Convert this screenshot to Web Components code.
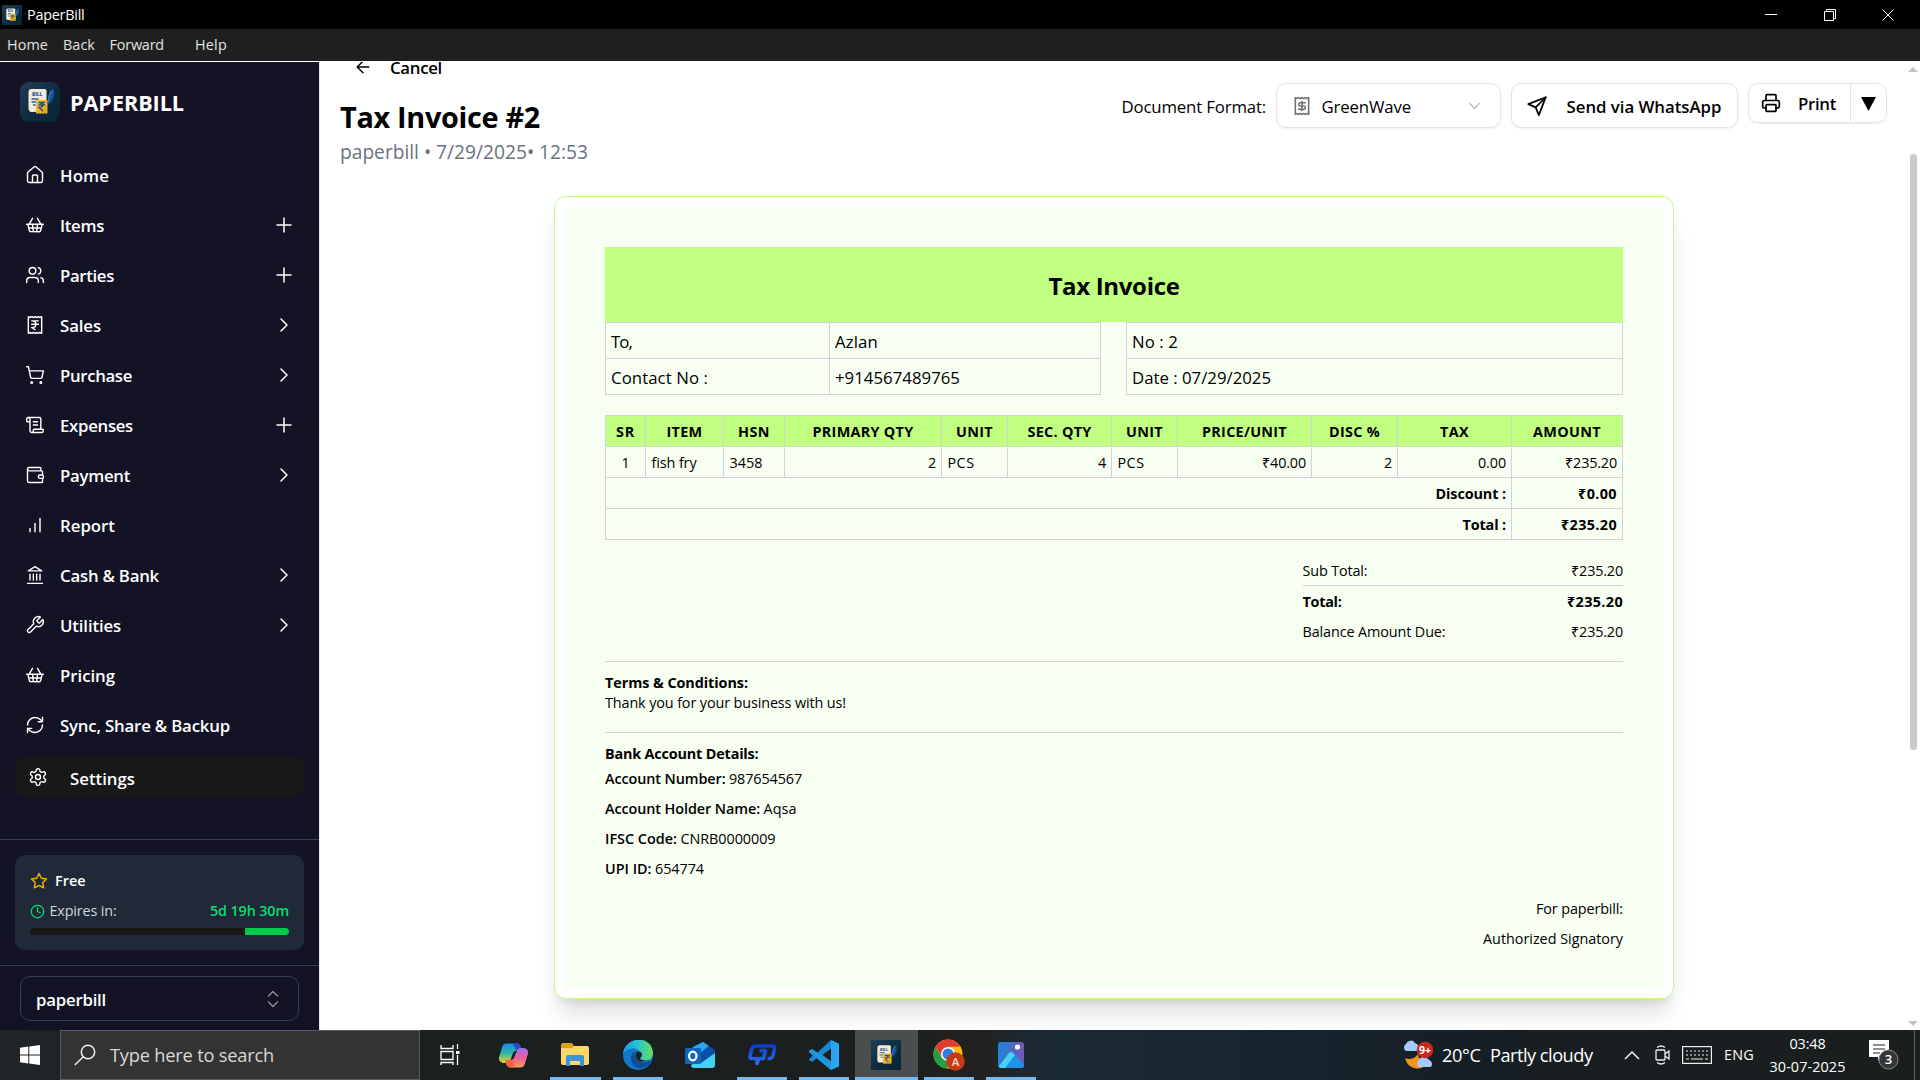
<!DOCTYPE html>
<html lang="en">
<head>
<meta charset="utf-8">
<title>PaperBill</title>
<style>
html,body{margin:0;padding:0}
body{width:1920px;height:1080px;overflow:hidden;background:#fff;font-family:"Open Sans","Noto Sans",sans-serif;color:#000}
</style>
</head>
<body>
<app-window></app-window>
<script>
const texts = [];

/* Single-line label; "w" is the advance width the label occupies, "s" its nominal size. */
class UiText extends HTMLElement {
  connectedCallback() {
    if (this.shadowRoot) return;
    const nominal = parseFloat(this.getAttribute('s') || '15');
    const size = nominal * 0.96;
    const weight = this.getAttribute('b') || '400';
    const colour = this.getAttribute('c') || 'inherit';
    const drop = this.hasAttribute('drop') ? 'padding-top:2px;' : '';
    this.attachShadow({mode:'open'}).innerHTML =
      `<style>:host{display:inline-block;flex:none;white-space:pre;line-height:20px;${drop}font-size:${size}px;font-weight:${weight};color:${colour}}span{display:inline-block}</style><span><slot></slot></span>`;
    texts.push(this);
    this.fit();
  }
  fit() {
    const w = parseFloat(this.getAttribute('w'));
    if (!w) return;
    const span = this.shadowRoot.querySelector('span');
    span.style.letterSpacing = '0px';
    span.style.width = 'auto';
    const natural = span.getBoundingClientRect().width;
    const n = this.textContent.length;
    if (natural) { span.style.letterSpacing = ((w - natural) / n) + 'px'; span.style.width = w + 'px'; }
  }
}
customElements.define('ui-text', UiText);

const ICONS = {
  home:'<path d="M15 21v-8a1 1 0 0 0-1-1h-4a1 1 0 0 0-1 1v8"/><path d="M3 10a2 2 0 0 1 .709-1.528l7-5.999a2 2 0 0 1 2.582 0l7 5.999A2 2 0 0 1 21 10v9a2 2 0 0 1-2 2H5a2 2 0 0 1-2-2z"/>',
  basket:'<path d="m15 11-1 9M19 11l-4-7M2 11h20M3.5 11l1.6 7.4a2 2 0 0 0 2 1.6h9.8a2 2 0 0 0 2-1.6l1.7-7.4M4.5 15.5h15M5 11l4-7M9 11l1 9"/>',
  users:'<path d="M16 21v-2a4 4 0 0 0-4-4H6a4 4 0 0 0-4 4v2"/><circle cx="9" cy="7" r="4"/><path d="M22 21v-2a4 4 0 0 0-3-3.87M16 3.13a4 4 0 0 1 0 7.75"/>',
  rupee:'<path d="M4 2v20l2-1 2 1 2-1 2 1 2-1 2 1 2-1 2 1V2l-2 1-2-1-2 1-2-1-2 1-2-1-2 1Z"/><path d="M8 7h8M12 17.5 8 15h1a4 4 0 0 0 0-8M8 11h8"/>',
  dollar:'<path d="M4 2v20l2-1 2 1 2-1 2 1 2-1 2 1 2-1 2 1V2l-2 1-2-1-2 1-2-1-2 1-2-1-2 1Z"/><path d="M16 8h-6a2 2 0 1 0 0 4h4a2 2 0 1 1 0 4H8M12 17.5v-11"/>',
  cart:'<circle cx="8" cy="21" r="1"/><circle cx="19" cy="21" r="1"/><path d="M2.05 2.05h2l2.66 12.42a2 2 0 0 0 2 1.58h9.78a2 2 0 0 0 1.95-1.57l1.65-7.43H5.12"/>',
  scroll:'<path d="M15 12h-5M15 8h-5M19 17V5a2 2 0 0 0-2-2H4"/><path d="M8 21h12a2 2 0 0 0 2-2v-1a1 1 0 0 0-1-1H11a1 1 0 0 0-1 1v1a2 2 0 1 1-4 0V5a2 2 0 1 0-4 0v2a1 1 0 0 0 1 1h3"/>',
  wallet:'<path d="M19 7V4a1 1 0 0 0-1-1H5a2 2 0 0 0 0 4h15a1 1 0 0 1 1 1v4h-3a2 2 0 0 0 0 4h3a1 1 0 0 0 1-1v-2a1 1 0 0 0-1-1"/><path d="M3 5v14a2 2 0 0 0 2 2h15a1 1 0 0 0 1-1v-4"/>',
  bars:'<path d="M12 20V10M18 20V4M6 20v-4"/>',
  bank:'<path d="M3 22h18M6 18v-7M10 18v-7M14 18v-7M18 18v-7M12 2l8 5H4z"/>',
  wrench:'<path d="M14.7 6.3a1 1 0 0 0 0 1.4l1.6 1.6a1 1 0 0 0 1.4 0l3.77-3.77a6 6 0 0 1-7.94 7.94l-6.91 6.91a2.12 2.12 0 0 1-3-3l6.91-6.91a6 6 0 0 1 7.94-7.94l-3.76 3.76z"/>',
  sync:'<path d="M3 12a9 9 0 0 1 9-9 9.75 9.75 0 0 1 6.74 2.74L21 8M21 3v5h-5M21 12a9 9 0 0 1-9 9 9.75 9.75 0 0 1-6.74-2.74L3 16M8 16H3v5"/>',
  gear:'<path d="M12.22 2h-.44a2 2 0 0 0-2 2v.18a2 2 0 0 1-1 1.73l-.43.25a2 2 0 0 1-2 0l-.15-.08a2 2 0 0 0-2.73.73l-.22.38a2 2 0 0 0 .73 2.73l.15.1a2 2 0 0 1 1 1.72v.51a2 2 0 0 1-1 1.74l-.15.09a2 2 0 0 0-.73 2.73l.22.38a2 2 0 0 0 2.73.73l.15-.08a2 2 0 0 1 2 0l.43.25a2 2 0 0 1 1 1.73V20a2 2 0 0 0 2 2h.44a2 2 0 0 0 2-2v-.18a2 2 0 0 1 1-1.73l.43-.25a2 2 0 0 1 2 0l.15.08a2 2 0 0 0 2.73-.73l.22-.39a2 2 0 0 0-.73-2.73l-.15-.08a2 2 0 0 1-1-1.74v-.5a2 2 0 0 1 1-1.74l.15-.09a2 2 0 0 0 .73-2.73l-.22-.38a2 2 0 0 0-2.73-.73l-.15.08a2 2 0 0 1-2 0l-.43-.25a2 2 0 0 1-1-1.73V4a2 2 0 0 0-2-2z"/><circle cx="12" cy="12" r="3"/>',
  plus:'<path d="M5 12h14M12 5v14"/>',
  right:'<path d="m9 18 6-6-6-6"/>',
  down:'<path d="m5 9 7 7 7-7"/>',
  updown:'<path d="m6.5 15.5 5.5 5.5 5.5-5.5M6.5 8.5 12 3l5.5 5.5"/>',
  star:'<path d="m12 2 3.09 6.26L22 9.27l-5 4.87 1.18 6.88L12 17.77l-6.18 3.25L7 14.14 2 9.27l6.91-1.01z"/>',
  clock:'<circle cx="12" cy="12" r="10"/><path d="M12 6v6l4 2"/>',
  back:'<path d="m12 19-7-7 7-7M19 12H5"/>',
  send:'<path d="M21.5 2.5 2.5 10l8 3.5L14 22z"/><path d="M21.5 2.5 10.5 13.5"/>',
  printer:'<path d="M6 18H4a2 2 0 0 1-2-2v-5a2 2 0 0 1 2-2h16a2 2 0 0 1 2 2v5a2 2 0 0 1-2 2h-2M6 9V3a1 1 0 0 1 1-1h10a1 1 0 0 1 1 1v6"/><rect x="6" y="14" width="12" height="8" rx="1"/>'
};
class UiIcon extends HTMLElement {
  connectedCallback() {
    if (this.shadowRoot) return;
    const s = this.getAttribute('size') || 20, sw = this.getAttribute('sw') || 1.7;
    this.attachShadow({mode:'open'}).innerHTML =
      `<style>:host{display:block;flex:none;width:${s}px;height:${s}px}svg{display:block;width:100%;height:100%}</style>
       <svg viewBox="0 0 24 24" fill="none" stroke="currentColor" stroke-width="${sw}" stroke-linecap="round" stroke-linejoin="round">${ICONS[this.getAttribute('name')]}</svg>`;
  }
}
customElements.define('ui-icon', UiIcon);

class AppLogo extends HTMLElement {
  connectedCallback() {
    const s = this.getAttribute('size'), r = this.getAttribute('r') || 0;
    this.attachShadow({mode:'open'}).innerHTML =
      `<style>:host{display:block;flex:none;width:${s}px;height:${s}px}svg{display:block}</style>
      <svg width="${s}" height="${s}" viewBox="0 0 40 40">
        <defs><linearGradient id="g" x1="0" y1="0" x2="1" y2="1"><stop offset="0" stop-color="#1f3d54"/><stop offset=".6" stop-color="#0d2b3f"/><stop offset="1" stop-color="#062433"/></linearGradient>
        <linearGradient id="y" x1="0" y1="0" x2="1" y2="1"><stop offset="0" stop-color="#f6be36"/><stop offset="1" stop-color="#e9a21c"/></linearGradient></defs>
        <rect width="40" height="40" rx="${r}" fill="url(#g)"/>
        <path d="M8.500 10a3 3 0 0 1 3-3h13a2 2 0 0 1 2 2V29.500l-14 .5a3.500 3.500 0 0 1-4-3.500z" fill="#f6ead6"/>
        <text x="12" y="14.300" font-family="Open Sans" font-weight="800" font-size="5" fill="#2a5ea6" textLength="10.500">BILL</text>
        <path d="M11.500 17h7M11.500 20h4.500M13 23h2.500" stroke="#2a5ea6" stroke-width="1.300"/>
        <path d="M33.500 6.500c1.500 4 .5 10.500-3.500 14.500l-2 1 0-4c0-5 2-9.500 5.500-11.500z" fill="#1c4f9c"/><path d="M32 8.500c-2.500 3-3.200 7-3.500 11" stroke="#4b86d6" fill="none"/>
        <path d="M16 18h11.500v13l-1.500 1-1.500-1-1.400 1-1.400-1-1.400 1-1.400-1-1.400 1-1.500-1z" fill="url(#y)"/>
        <path d="M18.500 20.500h6.500M18.500 23h6.500M19 20.500c5 0 5 4.800 0 4.800l4 4" stroke="#174a86" stroke-width="1.300" fill="none"/>
      </svg>`;
  }
}
customElements.define('app-logo', AppLogo);

class TitleBar extends HTMLElement {
  connectedCallback() {
    this.attachShadow({mode:'open'}).innerHTML = `<style>
      :host{display:block;flex:none;color:#fff}
      .t{height:29px;background:#000;display:flex;align-items:center;padding:0 26px 0 2px;box-sizing:border-box}
      .t ui-text{margin-left:5px}.sp{flex:1}
      svg{display:block;margin-left:46.500px}
      .m{height:32px;background:#1f1f1f;display:flex;align-items:center;padding-left:7px;color:#e2e2e2}
    </style>
    <div class="t"><app-logo size="20"></app-logo><ui-text s="15" w="57.500">PaperBill</ui-text><div class="sp"></div>
      <svg width="12" height="12"><path d="M0 5.500h12" stroke="#fff"/></svg>
      <svg width="12" height="12" fill="none" stroke="#fff"><path d="M.5 2.500h9v9h-9zM2.500 2.500v-2h9v9h-2"/></svg>
      <svg width="12" height="12" stroke="#fff"><path d="M.5.500l11 11M11.500.500l-11 11"/></svg></div>
    <div class="m"><ui-text s="15" w="41" style="margin-right:15px">Home</ui-text><ui-text s="15" w="32" style="margin-right:14.500px">Back</ui-text><ui-text s="15" w="54.500" style="margin-right:31px">Forward</ui-text><ui-text s="15" w="32">Help</ui-text></div>`;
  }
}
customElements.define('title-bar', TitleBar);

class NavItem extends HTMLElement {
  connectedCallback() {
    const end = this.getAttribute('end'), act = this.hasAttribute('active');
    this.attachShadow({mode:'open'}).innerHTML = `<style>
      :host{display:flex;flex:none;align-items:center;height:${act?40:50}px;color:#fff;${act?'margin:7px 15px 0;padding-left:13px;background:#181818;border-radius:10px':'padding:0 23px 0 25px'}}
      ui-text{margin-left:${act?22:15}px;${act?'margin-top:2px':''}}.sp{flex:1}
    </style><ui-icon name="${this.getAttribute('icon')}" size="20"></ui-icon><ui-text drop s="17.500" b="600" w="${this.getAttribute('w')}">${this.textContent.replace('&','&amp;')}</ui-text><div class="sp"></div>${end?`<ui-icon name="${end}" size="24" sw="1.500"></ui-icon>`:''}`;
  }
}
customElements.define('nav-item', NavItem);

class SideBar extends HTMLElement {
  connectedCallback() {
    this.attachShadow({mode:'open'}).innerHTML = `<style>
      :host{display:flex;flex-direction:column;flex:none;width:319px;margin-top:1px;border-right:1px solid #e5e7eb;background:#131325;color:#fff;overflow:hidden}
      .brand{display:flex;align-items:center;gap:10px;height:40px;padding:20px 20px 28px}
      .sp{flex:1}
      .plan{border-top:1px solid #36404f;padding:15px;height:95px}
      .card{background:#1f2937;border-radius:10px;height:95px;padding:16px 15px 0;box-sizing:border-box}
      .row{display:flex;align-items:center;height:20px}
      .bar{height:7px;border-radius:4px;background:#181818;overflow:hidden;margin-top:7px;display:flex;justify-content:flex-end}
      .bar i{width:44px;background:#00c950}
      .org{border-top:1px solid #36404f;padding:10px 20px 9px}
      .sel{height:45px;border:1px solid #36404f;border-radius:10px;box-sizing:border-box;display:flex;align-items:center;padding:0 15px}
    </style>
    <div class="brand"><app-logo size="40" r="9"></app-logo><ui-text drop s="22.500" b="700" w="114">PAPERBILL</ui-text></div>
    <nav-item icon="home" w="49">Home</nav-item>
    <nav-item icon="basket" w="44" end="plus">Items</nav-item>
    <nav-item icon="users" w="54" end="plus">Parties</nav-item>
    <nav-item icon="rupee" w="41" end="right">Sales</nav-item>
    <nav-item icon="cart" w="72" end="right">Purchase</nav-item>
    <nav-item icon="scroll" w="73" end="plus">Expenses</nav-item>
    <nav-item icon="wallet" w="70" end="right">Payment</nav-item>
    <nav-item icon="bars" w="55">Report</nav-item>
    <nav-item icon="bank" w="99" end="right">Cash &amp; Bank</nav-item>
    <nav-item icon="wrench" w="61" end="right">Utilities</nav-item>
    <nav-item icon="basket" w="55">Pricing</nav-item>
    <nav-item icon="sync" w="170">Sync, Share &amp; Backup</nav-item>
    <nav-item icon="gear" w="65" active>Settings</nav-item>
    <div class="sp"></div>
    <div class="plan"><div class="card">
      <div class="row"><ui-icon name="star" size="18" sw="1.900" style="color:#f0b100"></ui-icon><ui-text s="15" b="600" w="30.500" style="margin-left:7px">Free</ui-text></div>
      <div class="row" style="margin-top:10px"><ui-icon name="clock" size="15" sw="2" style="color:#05df72"></ui-icon><ui-text s="15" c="#d1d5dc" w="67" style="margin-left:4.500px">Expires in:</ui-text><div class="sp"></div><ui-text s="15" b="600" c="#05df72" w="79">5d 19h 30m</ui-text></div>
      <div class="bar"><i></i></div>
    </div></div>
    <div class="org"><div class="sel"><ui-text drop s="17.500" b="600" w="70">paperbill</ui-text><div class="sp"></div><ui-icon name="updown" size="20" sw="1.500" style="color:#9a9aa2"></ui-icon></div></div>`;
  }
}
customElements.define('side-bar', SideBar);

class InvoiceCard extends HTMLElement {
  connectedCallback() {
    const H = [['SR',19],['ITEM',36],['HSN',32],['PRIMARY QTY',101],['UNIT',37],['SEC. QTY',64],['UNIT',37],['PRICE/UNIT',85],['DISC %',51],['TAX',29],['AMOUNT',68]];
    const R = [['1',8,'c'],['fish fry',45,'l'],['3458',33,'l'],['2',8,'r'],['PCS',27,'l'],['4',8,'r'],['PCS',27,'l'],['₹40.00',44,'r'],['2',8,'r'],['0.00',28,'r'],['₹235.20',52,'r']];
    const T = (t,w,b=400,s=15) => `<ui-text ${s>15?'drop':''} s="${s}" b="${b}" w="${w}">${t}</ui-text>`;
    this.attachShadow({mode:'open'}).innerHTML = `<style>
      :host{display:block;box-sizing:border-box;width:1120px;height:803px;border:1px solid #bfff80;border-radius:12px;padding:10px;background:#fff;box-shadow:0 20px 25px -5px rgba(0,0,0,.12),0 8px 10px -6px rgba(0,0,0,.12)}
      .page{background:#f7fff3;height:781px;box-sizing:border-box;padding:40px}
      .banner{height:75px;background:#c0ff80;display:flex;align-items:center;justify-content:center}
      .info{display:flex;justify-content:space-between;margin-bottom:20px}
      .grid{display:grid;border:solid #cfd3dc;border-width:1px 0 0 1px;box-sizing:border-box}
      .grid>div{border:solid #cfd3dc;border-width:0 1px 1px 0;display:flex;align-items:center;padding:1px 5px 0}
      .items{grid-template-columns:40px 78px 61px 157px 66px 104px 66px 134px 86px 114px 111px;grid-auto-rows:31px}
      .grid.items>.h{background:#c0ff80;justify-content:center;padding:2px 0 0}
      .grid.items>.l{padding-left:5.500px}
      .c{justify-content:center}.grid>.r{justify-content:flex-end}
      .wide{grid-column:span 10}
      .sum{width:320.500px;margin:16px 0 14px auto}
      .sum div{display:flex;justify-content:space-between;align-items:center;height:29px}
      .sum div:first-child{border-bottom:1px solid #cfd3dc}.sum div:nth-child(2){height:31px}.sum div:nth-child(3){height:30px}
      .sec{border-top:1px solid #cfd3dc;padding-top:11px}
      .ln{display:flex;align-items:center;height:20px}.ln.b{height:30px;gap:3.500px}
      .sign{margin-top:10px}.sign div{height:30px;display:flex;align-items:center;justify-content:flex-end}
    </style>
    <div class="page">
      <div class="banner">${T('Tax Invoice',131,700,25)}</div>
      <div class="info">
        <div class="grid" style="grid-template-columns:224px 271px;grid-auto-rows:36px"><div>${T('To,',21,400,17.5)}</div><div>${T('Azlan',43,400,17.5)}</div><div>${T('Contact No :',97,400,17.5)}</div><div>${T('+914567489765',125,400,17.5)}</div></div>
        <div class="grid" style="grid-template-columns:496px;grid-auto-rows:36px"><div>${T('No : 2',46,400,17.5)}</div><div>${T('Date : 07/29/2025',139,400,17.5)}</div></div>
      </div>
      <div class="grid items">
        ${H.map(h=>`<div class="h">${T(h[0],h[1],700)}</div>`).join('')}
        ${R.map(r=>`<div class="${r[2]}">${T(r[0],r[1])}</div>`).join('')}
        <div class="wide r">${T('Discount :',70.5,700)}</div><div class="r">${T('₹0.00',39,700)}</div>
        <div class="wide r">${T('Total :',43.5,700)}</div><div class="r">${T('₹235.20',56,700)}</div>
      </div>
      <div class="sum"><div>${T('Sub Total:',65)}${T('₹235.20',52)}</div><div>${T('Total:',39,700)}${T('₹235.20',56,700)}</div><div>${T('Balance Amount Due:',143)}${T('₹235.20',52)}</div></div>
      <div class="sec"><div class="ln">${T('Terms &amp; Conditions:',143,700)}</div><div class="ln">${T('Thank you for your business with us!',241)}</div></div>
      <div class="sec" style="margin-top:19px"><div class="ln">${T('Bank Account Details:',153.5,700)}</div>
        <div class="ln b">${T('Account Number:',120.5,600)}${T('987654567',73)}</div>
        <div class="ln b">${T('Account Holder Name:',155,600)}${T('Aqsa',33)}</div>
        <div class="ln b">${T('IFSC Code:',72,600)}${T('CNRB0000009',95)}</div>
        <div class="ln b">${T('UPI ID:',46.5,600)}${T('654774',49)}</div></div>
      <div class="sign"><div>${T('For paperbill:',87)}</div><div>${T('Authorized Signatory',140)}</div></div>
    </div>`;
  }
}
customElements.define('invoice-card', InvoiceCard);

class MainPane extends HTMLElement {
  connectedCallback() {
    this.attachShadow({mode:'open'}).innerHTML = `<style>
      :host{display:flex;flex:1;background:#fff}
      .col{flex:1;display:flex;flex-direction:column}
      .head{display:flex;justify-content:space-between;height:135px;padding:0 19px 0 20px;flex:none}
      .cancel{display:flex;align-items:center;height:14px;margin-bottom:21px;padding-left:13px}
      .l{display:flex;align-items:center}
      .tools{display:flex;align-items:flex-start;padding-top:22px}
      .box{box-sizing:border-box;height:45px;border:1px solid #e4e4e7;border-radius:10px;display:flex;align-items:center;box-shadow:0 1px 2px rgba(0,0,0,.07);flex:none}
      .sp{flex:1}
      .arrow{height:13px;overflow:hidden;display:flex;align-items:center}
      invoice-card{margin-left:234px;flex:none}
      .sb{width:14px;flex:none;display:flex;flex-direction:column;align-items:center}
      .sb svg{display:block}.sb i{width:7px;height:596px;border-radius:4px;background:#c9c9c9;margin-top:82px}
    </style>
    <div class="col"><div class="head">
      <div><div class="cancel"><div class="arrow"><ui-icon name="back" size="20" sw="1.700" style="margin-top:-2px"></ui-icon></div><ui-text s="17.500" b="600" w="52" style="margin-left:17px">Cancel</ui-text></div>
        <div class="l" style="height:40px"><ui-text drop s="30" b="700" w="200">Tax Invoice #2</ui-text></div>
        <div class="l" style="height:30px"><ui-text drop s="20" c="#6a7282" w="248">paperbill • 7/29/2025• 12:53</ui-text></div></div>
      <div class="tools"><div class="l" style="height:46px;padding-top:1px;margin-right:10px"><ui-text s="17.500" w="144.500">Document Format:</ui-text></div>
        <div class="box" style="width:225px;padding:0 17px 0 15px;margin-right:10px"><ui-icon name="dollar" size="20" sw="1.900" style="color:#707070"></ui-icon><ui-text drop s="17.500" w="89.500" style="margin-left:9.500px">GreenWave</ui-text><div class="sp"></div><ui-icon name="down" size="17" sw="1.500" style="color:#aaa"></ui-icon></div>
        <div class="box" style="width:227px;padding-left:14px;margin-right:10px"><ui-icon name="send" size="22" sw="1.900"></ui-icon><ui-text drop s="17.500" b="600" w="155" style="margin-left:18.500px">Send via WhatsApp</ui-text></div>
        <div class="box" style="width:139px;height:40px"><div class="l" style="width:101px;height:100%;border-right:1px solid #e4e4e7"><ui-icon name="printer" size="20" sw="2" style="margin:-1px 0 0 12px"></ui-icon><ui-text s="17.500" b="600" w="38" style="margin:2px 0 0 17px">Print</ui-text></div>
          <svg width="15" height="14" style="margin:1px 0 0 10px"><path d="M0 0h15L7.500 14z"/></svg></div>
      </div></div>
      <invoice-card></invoice-card></div>
    <div class="sb"><svg width="10" height="5" style="margin-top:6px"><path d="M5 0l5 5H0z" fill="#c4c4c4"/></svg><i></i><div class="sp"></div><svg width="10" height="5" style="margin-bottom:4px"><path d="M0 0h10L5 5z" fill="#c4c4c4"/></svg></div>`;
  }
}
customElements.define('main-pane', MainPane);

class TaskBar extends HTMLElement {
  connectedCallback() {
    this.attachShadow({mode:'open'}).innerHTML = `<style>
      :host{display:flex;flex:none;height:50px;position:relative;z-index:1;color:#fff;background:linear-gradient(90deg,#1f2428 0,#1b1f20 420px,#1c1f20 900px,#22211f 975px,#1a2a35 1045px,#17242d 1300px,#151f26 1440px,#1a1e20 1600px,#1b1e1f 1920px)}
      .start{width:60px;display:flex;align-items:center;justify-content:center}
      .search{width:360px;box-sizing:border-box;background:#333;border:1px solid #5c5c5c;display:flex;align-items:center;padding-left:13px}
      .app{display:flex;flex-direction:column;align-items:center;justify-content:center;position:relative;width:62.200px;flex:none}
      .app.on::after{content:"";position:absolute;bottom:0;left:6px;right:6px;height:3px;background:#76b9ed}
      .app.act{background:#4b4e4f}.app.act::after{left:0;right:0}
      svg{display:block;flex:none}.sp{flex:1}
      .tray{display:flex;align-items:center}
      .clock{display:flex;flex-direction:column;align-items:center;width:76px}
      .clock ui-text{height:23px;line-height:23px}
    </style>
    <div class="start"><svg width="20" height="20"><path d="M0 2.800 8.300 1.500V9.500H0zM9.300 1.400 20 0v9.500H9.300zM0 10.500h8.300v8L0 17.200zM9.300 10.500H20V20L9.300 18.600z" fill="#fff"/></svg></div>
    <div class="search"><svg width="22" height="22" fill="none" stroke="#eee" stroke-width="1.500"><circle cx="14" cy="8" r="6.700"/><path d="M9.300 12.700.8 21"/></svg><ui-text s="19" w="164" c="#d8d8d8" style="margin-left:14px">Type here to search</ui-text></div>
    <div class="app"><svg width="22" height="22" style="margin-left:-2px" fill="none" stroke="#fff" stroke-width="1.300"><path d="M2 1v3.500h12V1M2 7.500h12v8H2zM2 21v-2.500h12V21M18.500 0v5M18.500 11v10"/><path d="M17 7h3.500v3H17z" fill="#fff" stroke="none"/></svg></div>
    <div class="app"><svg width="29" height="25" viewBox="1 1.500 28 27" preserveAspectRatio="none"><defs><linearGradient id="c1" x1="0" y1="0" x2="0" y2="1"><stop offset="0" stop-color="#1b8ae6"/><stop offset=".5" stop-color="#28b6a8"/><stop offset="1" stop-color="#f2d21f"/></linearGradient><linearGradient id="c2" x1="0" y1="0" x2="0" y2="1"><stop offset="0" stop-color="#a46bf0"/><stop offset=".5" stop-color="#e9609c"/><stop offset="1" stop-color="#fb9a52"/></linearGradient></defs>
      <path d="M8 2h10q3 0 4 4l1 4h-5q-3 0-4 4l-2 6q-1 3-4 3H5q-5-1-4-6l3-11q1-4 4-4z" fill="url(#c1)"/><path d="M14 2h5q2 0 3 4l1 4h-5z" fill="#1c50c4"/><path d="M22 28H12q-3 0-4-4l-1-4h5q3 0 4-4l2-5q1-4 4-4h3q5 1 4 6l-3 11q-1 4-4 4z" fill="url(#c2)"/><path d="M16 28h-4q-3 0-4-4l-1-4h5l2-1z" fill="#f4603c"/></svg></div>
    <div class="app on"><svg width="28" height="24" viewBox="0 0 28 24"><path d="M0 2q0-2 2-2h9l2 3v3H0z" fill="#e2a009"/><path d="M0 5h11l2-2h13q2 0 2 2v15q0 2-2 2H2q-2 0-2-2z" fill="#ffd766"/><path d="M5 23V14q0-2 2-2h14q2 0 2 2v9h-4v-5H9v5z" fill="#3b93dc"/></svg></div>
    <div class="app on"><svg width="30" height="30" viewBox="0 0 30 30"><defs><linearGradient id="e1" x1="0" y1="0" x2="1" y2="0"><stop offset="0" stop-color="#1798e6"/><stop offset=".5" stop-color="#2bc3d2"/><stop offset="1" stop-color="#66e04f"/></linearGradient></defs>
      <circle cx="15" cy="15" r="15" fill="#0f78cc"/><path d="M22 20.500q-4 0-5.500-2 3-2 1-6-3-5-9-4-6 1-8.500 6C1-4 29-6 30 13q0 7.500-8 7.500z" fill="url(#e1)"/><path d="M12 11q-8 7-1 15 7 5 14-1 2-2 3-5-5 3-11 1-6-3-5-10z" fill="#114d92"/><path d="M13.500 12q4-1.500 5.500 2 .5 2.500-2 4.500 1.500 2.500 6 2-5 2-8.500-1-3-3.500-1-7.500z" fill="#1c1f20"/></svg></div>
    <div class="app"><svg width="30" height="30" viewBox="0 0 30 30"><path d="M5 9 18 2l11 8v4L18 22H5z" fill="#1183d8"/><path d="m8 7 10-5 6 4-11 8-5-1z" fill="#2aa6ec"/><path d="M30 13v12q0 3-3 3H9q-3 0-3-3l10-6z" fill="#43d1f5"/><path d="m24 6 6 4v3L16 23l-2-9z" fill="#0a4fa6"/><rect y="8" width="16" height="16" rx="1.500" fill="#0c66c0"/><ellipse cx="7.800" cy="16" rx="3.700" ry="4.400" fill="none" stroke="#fff" stroke-width="2.200"/></svg></div>
    <div class="app on"><svg width="30" height="26" viewBox="0 0 30 26"><defs><linearGradient id="b" x1="0" y1="0" x2="0" y2="1"><stop offset="0" stop-color="#0f3fc8"/><stop offset="1" stop-color="#2a6cf0"/></linearGradient></defs><g fill="none" stroke="url(#b)" stroke-width="3.600" stroke-linejoin="round"><path d="M12.500 8.500H18.500L16.500 16.500H12L10 21.500V16.500H5Q2.500 16.500 3 14L5 6.500Q6 4 8.500 4H25.500Q28 4 27.500 6.500L26 13.500Q25 16.500 22.500 16.500H20.500"/></g></svg></div>
    <div class="app on"><svg width="30" height="30" viewBox="0 0 30 30"><path d="M22 0 8 13 3 9 0 11v1l4 3.500L0 19v1l3 2 5-4 14 12z" fill="#1b87d0"/><path d="M22.200 8.500v13L13.500 15z" fill="#1c1f20"/><path d="M3 9 0 11v1l22 18 .2-8.500z" fill="#2295df"/><path d="M22 0l8 3.500v23L22 30z" fill="#29a5f2"/></svg></div>
    <div class="app on act"><app-logo size="30"></app-logo></div>
    <div class="app on"><svg width="32" height="32" viewBox="0 0 32 32"><circle cx="15" cy="15" r="14.500" fill="#fbc116"/><path d="M2.400 7.800a14.500 14.500 0 0 1 25.100 0H15L9 18z" fill="#e33b2e"/><path d="M2.400 7.800A14.500 14.500 0 0 0 14 29.500L20 19H9z" fill="#24a148"/><circle cx="15" cy="15" r="7" fill="#fff"/><circle cx="15" cy="15" r="5.500" fill="#2a7de1"/><circle cx="22.500" cy="22.500" r="9.300" fill="#c53a12"/><text x="22.500" y="26.600" text-anchor="middle" font-family="Open Sans" font-size="11.500" font-weight="600" fill="#f4d9cf">A</text></svg></div>
    <div class="app on"><svg width="26" height="26" viewBox="0 0 26 26"><defs><linearGradient id="p" x1="0" y1="0" x2="1" y2="0"><stop offset="0" stop-color="#1e83d8"/><stop offset="1" stop-color="#7457b8"/></linearGradient></defs><rect width="26" height="26" rx="3" fill="url(#p)"/><path d="M1 25 11 11q2-2 4 0l11 12q0 3-3 3H3z" fill="#1c94e6"/><path d="M1 24 11 11q2-2 4 0l2 2L7 26H3q-2 0-2-2z" fill="#45d2f4"/><circle cx="19.500" cy="5" r="2.600" fill="#fff"/></svg></div>
    <div class="sp"></div>
    <div class="tray">
      <svg width="32" height="30" viewBox="0 0 32 30"><path d="M3 18q8 3 13-4 1 7 8 10-4 6-12 4Q5 26 3 18z" fill="#f0921e"/><path d="M4 11a4 4 0 0 1 0-7 5 5 0 0 1 9-1q5 2 4 8z" fill="#a9c8fa"/><path d="M17 27a4 4 0 0 1 0-7 5 5 0 0 1 9-1q6 3 3 8z" fill="#a9c8fa"/><circle cx="23" cy="10" r="8.300" fill="#c8281d"/><text x="23" y="14" text-anchor="middle" font-family="Open Sans" font-size="10.500" font-weight="700" fill="#fff">9+</text></svg>
      <ui-text s="19" w="38.500" style="margin-left:8px">20°C</ui-text><ui-text s="19" w="102.500" style="margin-left:9.500px">Partly cloudy</ui-text>
      <svg width="16" height="10" style="margin-left:31px" fill="none" stroke="#eee" stroke-width="1.500"><path d="m1 9 7-7 7 7"/></svg>
      <svg width="16" height="20" style="margin-left:15px" fill="none" stroke="#eee" stroke-width="1.300"><rect x="1" y="5" width="9" height="10" rx="1"/><path d="m10 9 4-3v8l-4-3M2 2.500q4-3 8 0M2 17.500q4 3 8 0"/></svg>
      <svg width="30" height="18" style="margin-left:11px" fill="none" stroke="#eee" stroke-width="1.200"><rect x=".6" y=".6" width="28.800" height="16.800"/><path d="M4 5h22M4 9h22" stroke-dasharray="2 2"/><path d="M4 13h3M9 13h12M23 13h3"/></svg>
      <ui-text s="15" w="30" style="margin:0 15.500px 0 12.500px">ENG</ui-text>
      <div class="clock"><ui-text s="15" w="36">03:48</ui-text><ui-text s="15" w="76">30-07-2025</ui-text></div>
      <svg width="31" height="30" viewBox="0 0 31 30" style="margin:0 14.500px 0 23px"><path d="M0 0h20v17H12l-3 4v-4H0z" fill="#fff"/><path d="M4 5h12M4 9h12M4 13h7" stroke="#222" stroke-width="1.200"/><circle cx="19.500" cy="19.500" r="9.500" fill="#333738" stroke="#888"/><text x="19.500" y="24" text-anchor="middle" font-family="Open Sans" font-size="13" font-weight="600" fill="#fff">3</text></svg>
      <svg width="6" height="50"><path d="M.5 0v50" stroke="#5d6163"/></svg>
    </div>`;
  }
}
customElements.define('task-bar', TaskBar);

class AppWindow extends HTMLElement {
  connectedCallback() {
    this.attachShadow({mode:'open'}).innerHTML = `<style>
      :host{display:flex;flex-direction:column;width:1920px;height:1080px;overflow:hidden;background:#fff}
      .body{flex:1;display:flex;min-height:0}
    </style><title-bar></title-bar><div class="body"><side-bar></side-bar><main-pane></main-pane></div><task-bar></task-bar>`;
  }
}
customElements.define('app-window', AppWindow);
texts.forEach(t => t.fit());
</script>
</body>
</html>
